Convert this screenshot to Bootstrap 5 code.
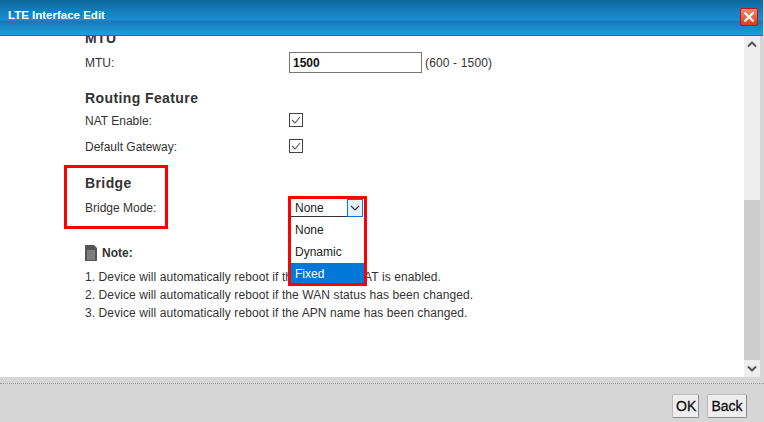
<!DOCTYPE html>
<html lang="en">
<head>
    <meta charset="UTF-8">
    <title>LTE Interface Edit</title>
    <link href="https://cdn.jsdelivr.net/npm/bootstrap@5.3.0/dist/css/bootstrap.min.css" rel="stylesheet">
    <style>
        html, body {
            height: 422px;
            overflow: hidden;
        }
        body {
            background-color: #d6d6d6;
            color: #333;
            font-family: "Liberation Sans", Arial, sans-serif;
            font-size: 12px;
        }
        .dlg {
            width: 764px;
            height: 422px;
            position: relative;
        }
        .dlg-head {
            height: 36px;
            margin-right: 1px;
            padding: 8px 5px 0 8px;
            color: #fff;
            font-weight: 700;
            font-size: 11.5px;
            line-height: 14px;
            background: linear-gradient(#0f689f 0, #1a8ed3 20px, #1878b9 21px, #1aa0d8 35px);
            border-bottom: 1px solid #0b6f9c;
        }
        .close-x {
            width: 18px;
            height: 18px;
            background: linear-gradient(#ee8a6c, #dd3b1a);
            border: 1px solid #c8121a;
            border-radius: 2px;
        }
        .dlg-mid {
            height: 341px;
        }
        .dlg-scroll {
            flex: 1;
            background: #fff;
            overflow: hidden;
            padding-left: 85px;
        }
        .sec-title {
            font-size: 14px;
            font-weight: 700;
            line-height: 16px;
            color: #333;
            letter-spacing: .4px;
        }
        .mtu-title { margin-top: -6px; height: 14px; margin-bottom: 5px; }
        .routing-title { margin-top: 15px; margin-bottom: 1px; }
        .bridge-title { margin-top: 16px; margin-bottom: 3px; }
        .note-head { margin-top: 24px; margin-bottom: 6px; height: 18px; }
        .field-row {
            height: 26px;
        }
        .field-label {
            width: 204px;
            padding-top: 2px;
            color: #333;
        }
        .mtu-input {
            width: 133px;
            height: 21px;
            border: 1px solid #777;
            padding: 1px 3px 0;
            font-weight: 700;
            font-size: 12px;
            font-family: inherit;
            color: #111;
        }
        .range-hint {
            margin-left: 3px;
            padding-top: 2px;
            letter-spacing: .15px;
        }
        .tick-box {
            width: 14px;
            height: 14px;
            border: 1px solid #444;
            background: #fff;
        }
        .sel-wrap {
            margin-left: 2px;
            margin-top: 2px;
        }
        .sel-box {
            width: 56px;
            height: 18px;
            border-bottom: 1px solid #333;
            padding-left: 4px;
            color: #222;
            line-height: 19px;
        }
        .sel-btn {
            width: 16px;
            height: 18px;
            background: #e5f1fb;
            border: 1px solid #0078d7;
        }
        .sb {
            width: 16px;
            background: #eee;
        }
        .sb-arrow {
            height: 17px;
        }
        .sb-track {
            flex: 1;
            padding-top: 147px;
        }
        .sb-thumb {
            height: 160px;
            background: #cdcdcd;
        }
        .sb-gap {
            width: 4px;
            background: #d6d6d6;
        }
        .note-line {
            line-height: 18px;
            letter-spacing: .09px;
        }
        .dlg-foot {
            height: 39px;
            margin-top: 6px;
            border-top: 1px dotted #999;
            padding: 10px 17px 0 0;
        }
        .foot-btn {
            height: 24px;
            padding: 0 3px;
            background: #eee;
            border: 1px solid #bbb;
            border-right-color: #888;
            border-bottom-color: #888;
            border-radius: 2px;
            font-size: 14px;
            font-family: inherit;
            color: #111;
            -webkit-text-stroke: .3px #111;
        }
        .btn-ok {
            width: 27px;
        }
        .btn-back {
            width: 40px;
        }
        .sel-menu {
            position: absolute;
            left: 291px;
            top: 219px;
            width: 73px;
            background: #fff;
            color: #222;
        }
        .sel-opt {
            height: 22px;
            line-height: 22px;
            padding-left: 4px;
        }
        .sel-opt-on {
            background: #0078d7;
            color: #fff;
        }
        .red-mark {
            position: absolute;
            border: 3px solid #f00;
        }
        .mark-left {
            left: 64px;
            top: 165px;
            width: 104px;
            height: 64px;
        }
        .mark-right {
            left: 288px;
            top: 196px;
            width: 79px;
            height: 90px;
        }
    </style>
</head>
<body>
    <div class="dlg">
        <div class="dlg-head d-flex justify-content-between">
            <span>LTE Interface Edit</span>
            <span class="close-x d-flex align-items-center justify-content-center">
                <svg width="12" height="12" viewBox="0 0 12 12"><path d="M1.5 1.5l9 9M10.5 1.5l-9 9" stroke="#fff" stroke-width="2.2"/></svg>
            </span>
        </div>

        <div class="dlg-mid d-flex">
            <div class="dlg-scroll">
                <div class="sec-title mtu-title">MTU</div>
                <div class="field-row d-flex align-items-center">
                    <div class="field-label">MTU:</div>
                    <input class="mtu-input" value="1500">
                    <span class="range-hint">(600 - 1500)</span>
                </div>
                <div class="sec-title routing-title">Routing Feature</div>
                <div class="field-row d-flex align-items-center">
                    <div class="field-label">NAT Enable:</div>
                    <span class="tick-box d-flex"><svg width="12" height="12" viewBox="0 0 12 12"><path d="M2 6l3 3 5-6" fill="none" stroke="#555" stroke-width="1.1"/></svg></span>
                </div>
                <div class="field-row d-flex align-items-center">
                    <div class="field-label">Default Gateway:</div>
                    <span class="tick-box d-flex"><svg width="12" height="12" viewBox="0 0 12 12"><path d="M2 6l3 3 5-6" fill="none" stroke="#555" stroke-width="1.1"/></svg></span>
                </div>
                <div class="sec-title bridge-title">Bridge</div>
                <div class="field-row d-flex align-items-center">
                    <div class="field-label">Bridge Mode:</div>
                    <div class="sel-wrap d-flex">
                        <div class="sel-box">None</div>
                        <div class="sel-btn d-flex align-items-center justify-content-center">
                            <svg width="10" height="6" viewBox="0 0 10 6"><path d="M1 1l4 4 4-4" fill="none" stroke="#333" stroke-width="1.1"/></svg>
                        </div>
                    </div>
                </div>
                <div class="note-head d-flex align-items-center fw-bold">
                    <svg class="me-1" width="13" height="16" viewBox="0 0 13 16"><path d="M0 0h9l3 3v13H0z" fill="#555"/><path d="M2 6h8M2 8h8M2 10h8M2 12h8M2 14h8" stroke="#bbb" stroke-width=".8"/></svg>
                    <span>Note:</span>
                </div>
                <div class="note-line">1. Device will automatically reboot if the setting of NAT is enabled.</div>
                <div class="note-line">2. Device will automatically reboot if the WAN status has been changed.</div>
                <div class="note-line">3. Device will automatically reboot if the APN name has been changed.</div>
            </div>
            <div class="sb d-flex flex-column">
                <div class="sb-arrow d-flex align-items-center justify-content-center">
                    <svg width="10" height="7" viewBox="0 0 10 7"><path d="M1 5.5l4-4 4 4" fill="none" stroke="#555" stroke-width="2"/></svg>
                </div>
                <div class="sb-track"><div class="sb-thumb"></div></div>
                <div class="sb-arrow d-flex align-items-center justify-content-center">
                    <svg width="10" height="7" viewBox="0 0 10 7"><path d="M1 1.5l4 4 4-4" fill="none" stroke="#555" stroke-width="2"/></svg>
                </div>
            </div>
            <div class="sb-gap"></div>
        </div>

        <div class="dlg-foot d-flex justify-content-end gap-2">
            <button class="foot-btn btn-ok">OK</button>
            <button class="foot-btn btn-back">Back</button>
        </div>

        <div class="sel-menu">
            <div class="sel-opt">None</div>
            <div class="sel-opt">Dynamic</div>
            <div class="sel-opt sel-opt-on">Fixed</div>
        </div>
        <div class="red-mark mark-left"></div>
        <div class="red-mark mark-right"></div>
    </div>
    <script src="https://cdn.jsdelivr.net/npm/bootstrap@5.3.0/dist/js/bootstrap.bundle.min.js"></script>
</body>
</html>
